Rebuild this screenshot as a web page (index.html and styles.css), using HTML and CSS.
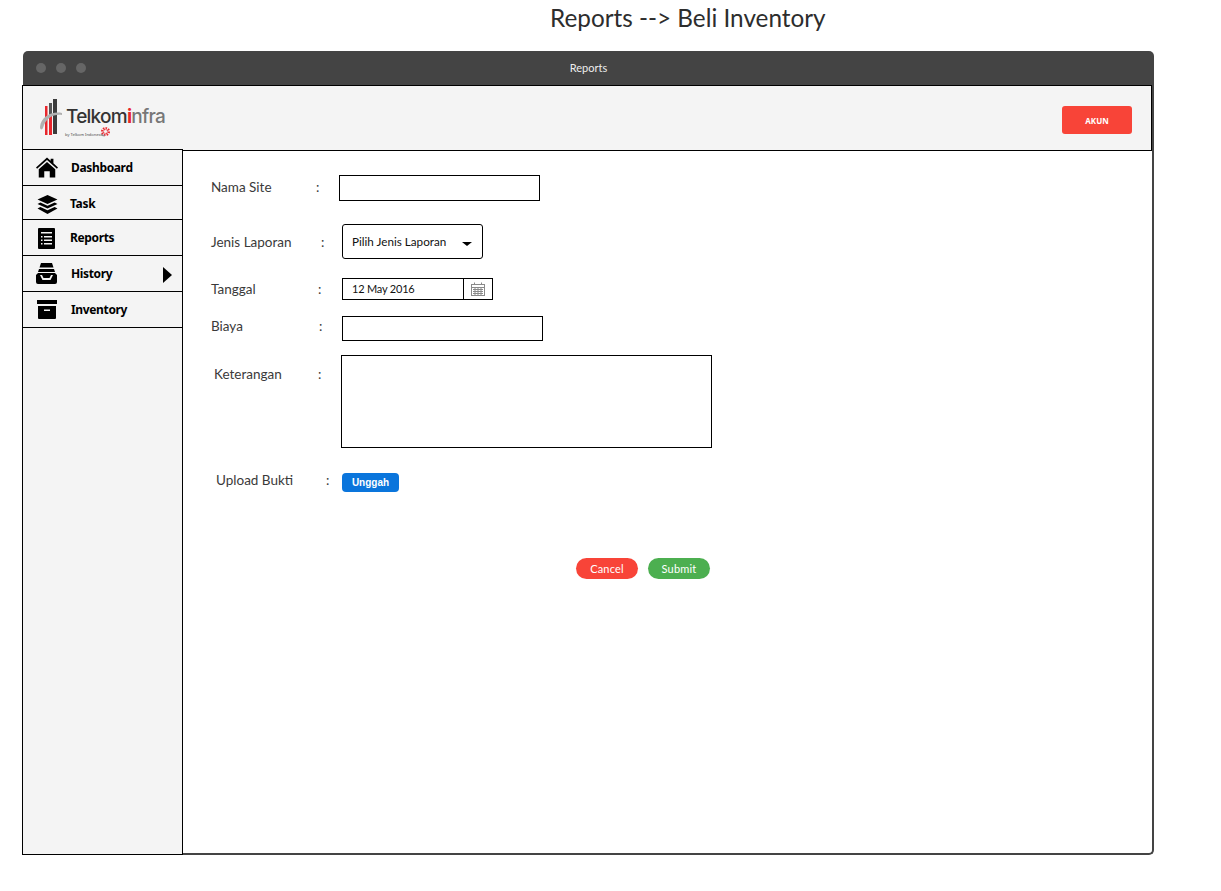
FILE: index.html
```html
<!DOCTYPE html>
<html lang="id">
<head>
    <meta charset="UTF-8">
    <meta name="viewport" content="width=device-width, initial-scale=1.0">
    <title>Reports --> Beli Inventory</title>
    <link rel="stylesheet" href="styles.css">
</head>
<body>
    <h1 class="page-title">Reports --&gt; Beli Inventory</h1>
    <div class="window">
        <div class="titlebar">
            <div class="dots"><span></span><span></span><span></span></div>
            <div class="titlebar-text">Reports</div>
        </div>
        <header class="header">
            <div class="logo">
                <svg class="logo-mark" width="26" height="37" viewBox="0 0 26 37">
                    <rect x="5" y="7" width="2.500" height="29" fill="#e8262c"/>
                    <rect x="9" y="4" width="3" height="32" fill="#e8262c"/>
                    <rect x="9" y="4" width="3" height="12" fill="#555"/>
                    <rect x="13" y="0" width="4" height="35" fill="#3c3c3c"/>
                    <path d="M0 28 C1 18 11 12 22 14 L22 16 C13 15 6 19 3 29 C2 31 0 31 0 28 Z" fill="#b0b0b0"/>
                </svg>
                <div class="logo-text">
                    <div class="logo-name">Telkom<b>i</b><em>nfra</em></div>
                    <div class="logo-sub">by Telkom Indonesia
                        <svg class="logo-star" width="10" height="10" viewBox="0 0 10 10" fill="none">
                            <circle cx="5.500" cy="4.500" r="3" stroke="#e8262c" stroke-width="3" stroke-dasharray="1.300 1"/>
                            <path d="M1 7 A3.500 3.500 0 0 0 5 9" stroke="#777" stroke-width="0.600"/>
                        </svg>
                    </div>
                </div>
            </div>
            <button class="akun">AKUN</button>
        </header>
        <div class="main">
            <nav class="sidebar">
                <a class="nav-item nav-dashboard">
                    <svg width="22" height="21" viewBox="0 0 24 22"><path d="M12 0 L16 3.600 V1.500 H19 V6.300 L24 11 L22.800 12.300 L12 2.800 L1.200 12.300 L0 11 Z M12 5 L21 13 V22 H15 V15 H9 V22 H3 V13 Z"/></svg>
                    <span>Dashboard</span>
                </a>
                <a class="nav-item nav-task">
                    <svg width="21" height="19" viewBox="0 0 21 20"><path d="M10.500 0 L21 4.800 L10.500 9.600 L0 4.800 Z M3 8 L10.500 11.400 L18 8 L21 9.500 L10.500 14.300 L0 9.500 Z M3 12.700 L10.500 16.100 L18 12.700 L21 14.200 L10.500 20 L0 14.200 Z"/></svg>
                    <span>Task</span>
                </a>
                <a class="nav-item nav-reports">
                    <svg width="17" height="21" viewBox="0 0 17 21"><path fill-rule="evenodd" d="M1 0 H16 A1 1 0 0 1 17 1 V20 A1 1 0 0 1 16 21 H1 A1 1 0 0 1 0 20 V1 A1 1 0 0 1 1 0 Z M3 4 V5.500 H14 V4 Z M3 8 V9.500 H4.500 V8 Z M6 8 V9.500 H14 V8 Z M3 11.500 V13 H4.500 V11.500 Z M6 11.500 V13 H14 V11.500 Z M3 15 V16.500 H4.500 V15 Z M6 15 V16.500 H14 V15 Z"/></svg>
                    <span>Reports</span>
                </a>
                <a class="nav-item nav-history">
                    <svg width="21" height="21" viewBox="0 0 21 21"><path fill-rule="evenodd" d="M5 0 H16 L17.500 4.500 H3.500 Z M3 6 H18 L19 9 H2 Z M2 10 H19 L21 12 V19 A2 2 0 0 1 19 21 H2 A2 2 0 0 1 0 19 V12 Z M4 12 L6 12 L7.500 15 H13.500 L15 12 H17 L14.500 17 H6.500 Z"/></svg>
                    <span>History</span>
                    <i class="nav-arrow"></i>
                </a>
                <a class="nav-item nav-inventory">
                    <svg width="20" height="19" viewBox="0 0 20 19"><path fill-rule="evenodd" d="M0 0 H20 V4 H0 Z M1 6 H19 V18 A1 1 0 0 1 18 19 H2 A1 1 0 0 1 1 18 Z M7 9.500 V11 H13 V9.500 Z"/></svg>
                    <span>Inventory</span>
                </a>
            </nav>
            <form class="form">
                <div class="row row-site">
                    <label>Nama Site</label><span class="colon">:</span>
                    <div class="box"></div>
                </div>
                <div class="row row-jenis">
                    <label>Jenis Laporan</label><span class="colon">:</span>
                    <div class="select"><span>Pilih Jenis Laporan</span><i class="caret"></i></div>
                </div>
                <div class="row row-tanggal">
                    <label>Tanggal</label><span class="colon">:</span>
                    <div class="date">
                        <span class="date-value">12 May 2016</span>
                        <span class="date-icon">
                            <svg width="14" height="14" viewBox="0 0 14 14" fill="none" stroke="#8a8a8a"><rect x="0.500" y="2.500" width="13" height="11"/><path d="M3.500 0.500 V3 M10.500 0.500 V3 M0.500 5.500 H13.500 M2 7.500 H12 M2 9.500 H12 M2 11.500 H12 M4 6 V13 M7 6 V13 M10 6 V13"/></svg>
                        </span>
                    </div>
                </div>
                <div class="row row-biaya">
                    <label>Biaya</label><span class="colon">:</span>
                    <div class="box"></div>
                </div>
                <div class="row row-ket">
                    <label>Keterangan</label><span class="colon">:</span>
                    <div class="textarea"></div>
                </div>
                <div class="row row-upload">
                    <label>Upload Bukti</label><span class="colon">:</span>
                    <button type="button" class="unggah">Unggah</button>
                </div>
                <div class="actions">
                    <button type="button" class="pill pill-cancel">Cancel</button>
                    <button type="button" class="pill pill-submit">Submit</button>
                </div>
            </form>
        </div>
    </div>
</body>
</html>
```

FILE: styles.css
```css
* {
    box-sizing: border-box;
}
body {
    margin: 0;
    background-color: #fff;
    font-family: "Noto Sans", Arial, sans-serif;
    color: #333;
}
.page-title {
    margin: 0;
    height: 51px;
    padding: 1px 0 0 550px;
    font-family: Lato, sans-serif;
    font-size: 24.3px;
    line-height: 34px;
    font-weight: 400;
    color: #2d2d2d;
}
.window {
    margin-left: 22px;
    width: 1132px;
    height: 804px;
    display: flex;
    flex-direction: column;
}
.titlebar {
    margin-left: 1px;
    height: 34px;
    background-color: #444;
    border-radius: 5px 5px 0 0;
    display: flex;
    align-items: center;
    position: relative;
}
.dots {
    display: flex;
    gap: 10px;
    padding-left: 13px;
}
.dots span {
    width: 10px;
    height: 10px;
    border-radius: 50%;
    background-color: #666;
}
.titlebar-text {
    position: absolute;
    left: 0;
    right: 0;
    padding-bottom: 2px;
    text-align: center;
    color: #eee;
    font-family: Lato, sans-serif;
    font-size: 11px;
}
.header {
    width: 1130px;
    height: 66px;
    background-color: #f4f4f4;
    border: 1px solid #000;
    display: flex;
    align-items: center;
    justify-content: space-between;
    padding: 0 19px 0 17px;
    box-shadow: 2px 0 0 #444;
}
.logo {
    display: flex;
    align-items: flex-start;
    height: 40px;
    margin-top: 2px;
}
.logo-mark {
    flex: none;
}
.logo-text {
    margin-top: 8px;
}
.logo-name {
    font-family: Inter, sans-serif;
    font-size: 19px;
    line-height: 20px;
    letter-spacing: -0.75px;
    font-weight: 500;
    color: #333;
}
.logo-name b {
    color: #e8262c;
    font-weight: 700;
}
.logo-name em {
    font-style: normal;
    color: #777;
}
.logo-sub {
    position: relative;
    margin: 5px 0 0 -1px;
    font-size: 4px;
    line-height: 6px;
    color: #444;
}
.logo-star {
    position: absolute;
    left: 35px;
    top: -5px;
}
.akun {
    width: 70px;
    height: 28px;
    margin-top: 4px;
    border: none;
    border-radius: 3px;
    background-color: #f84438;
    color: #fff;
    font-family: "Noto Sans", sans-serif;
    font-size: 8px;
    font-weight: 700;
}
.main {
    flex: 1;
    display: flex;
    background-color: #fff;
    border-right: 2px solid #444;
    border-bottom: 2px solid #444;
    border-bottom-right-radius: 5px;
    min-height: 0;
}
.sidebar {
    flex: none;
    width: 161px;
    height: 706px;
    margin-top: -2px;
    position: relative;
    background-color: #f4f4f4;
    border: 1px solid #000;
    display: flex;
    flex-direction: column;
}
.nav-item {
    position: relative;
    display: flex;
    align-items: center;
    border-bottom: 1px solid #000;
    color: #000;
    font-family: "Noto Sans", sans-serif;
    font-size: 12px;
    letter-spacing: -0.35px;
    font-weight: 700;
}
.nav-item svg {
    flex: none;
}
.nav-item span {
    padding-bottom: 1px;
}
.nav-dashboard {
    height: 36px;
    padding-left: 13px;
    gap: 13px;
}
.nav-task {
    height: 34px;
    padding: 3px 0 0 14px;
    gap: 12px;
}
.nav-reports {
    height: 36px;
    padding: 1px 0 0 15px;
    gap: 15px;
}
.nav-history {
    height: 36px;
    padding-left: 13px;
    gap: 14px;
}
.nav-inventory {
    height: 36px;
    padding-left: 14px;
    gap: 14px;
}
.nav-arrow {
    position: absolute;
    right: 10px;
    top: 11px;
    border-left: 9px solid #000;
    border-top: 8px solid transparent;
    border-bottom: 8px solid transparent;
}
.form {
    flex: 1;
    padding: 24px 0 0 28px;
    font-family: Lato, sans-serif;
    font-size: 13.5px;
}
.row {
    display: flex;
    color: #3a3a3a;
}
.row label {
    flex: none;
}
.colon {
    flex: none;
}
.row-site label {
    width: 105px;
}
.row-site .colon {
    width: 23px;
}
.row-site {
    height: 26px;
}
.row-site label, .row-site .colon {
    line-height: 24px;
}
.box {
    height: 26px;
    width: 201px;
    border: 1px solid #000;
    background-color: #fff;
}
.row-jenis {
    margin-top: 23px;
    height: 35px;
}
.row-jenis label {
    width: 110px;
}
.row-jenis .colon {
    width: 21px;
}
.row-jenis label, .row-jenis .colon {
    line-height: 36px;
}
.select {
    width: 141px;
    height: 35px;
    border: 1px solid #000;
    border-radius: 3px;
    display: flex;
    align-items: center;
    justify-content: space-between;
    padding: 0 10px 0 9px;
    font-size: 11.7px;
    color: #111;
}
.select span {
    padding-bottom: 2px;
}
.caret {
    margin-top: 4px;
    border-top: 4px solid #000;
    border-left: 5px solid transparent;
    border-right: 5px solid transparent;
}
.row-tanggal {
    margin-top: 19px;
    height: 22px;
}
.row-tanggal label {
    width: 107px;
}
.row-tanggal .colon {
    width: 24px;
}
.row-tanggal label, .row-tanggal .colon {
    line-height: 22px;
}
.date {
    width: 151px;
    height: 22px;
    border: 1px solid #000;
    display: flex;
    font-size: 11px;
    letter-spacing: -0.2px;
    color: #111;
}
.date-value {
    width: 121px;
    padding-left: 9px;
    line-height: 19px;
    border-right: 1px solid #000;
}
.date-icon {
    flex: 1;
    display: flex;
    align-items: center;
    justify-content: center;
}
.row-biaya {
    margin-top: 16px;
    height: 25px;
}
.row-biaya label {
    width: 108px;
}
.row-biaya .colon {
    width: 23px;
}
.row-biaya label, .row-biaya .colon {
    line-height: 20px;
}
.row-biaya .box {
    height: 25px;
}
.row-ket {
    margin-top: 14px;
    height: 93px;
}
.row-ket label {
    width: 104px;
    margin-left: 3px;
}
.row-ket .colon {
    width: 23px;
}
.row-ket label, .row-ket .colon {
    line-height: 38px;
}
.textarea {
    width: 371px;
    height: 93px;
    border: 1px solid #000;
}
.row-upload {
    margin-top: 25px;
    height: 19px;
}
.row-upload label {
    width: 110px;
    margin-left: 5px;
}
.row-upload .colon {
    width: 16px;
}
.row-upload label, .row-upload .colon {
    line-height: 14px;
}
.unggah {
    width: 57px;
    height: 19px;
    padding: 0;
    border: none;
    border-radius: 4px;
    background-color: #0a75dc;
    color: #fff;
    font-family: "Liberation Sans", Arial, sans-serif;
    font-size: 10px;
    font-weight: 700;
}
.actions {
    margin: 66px 0 0 365px;
    display: flex;
    gap: 10px;
}
.pill {
    width: 62px;
    height: 21px;
    padding: 0 0 1px;
    border: none;
    border-radius: 11px;
    color: #fff;
    font-family: Lato, sans-serif;
    font-size: 11px;
    letter-spacing: 0.2px;
}
.pill-cancel {
    background-color: #f84438;
}
.pill-submit {
    background-color: #4caf50;
}
```
